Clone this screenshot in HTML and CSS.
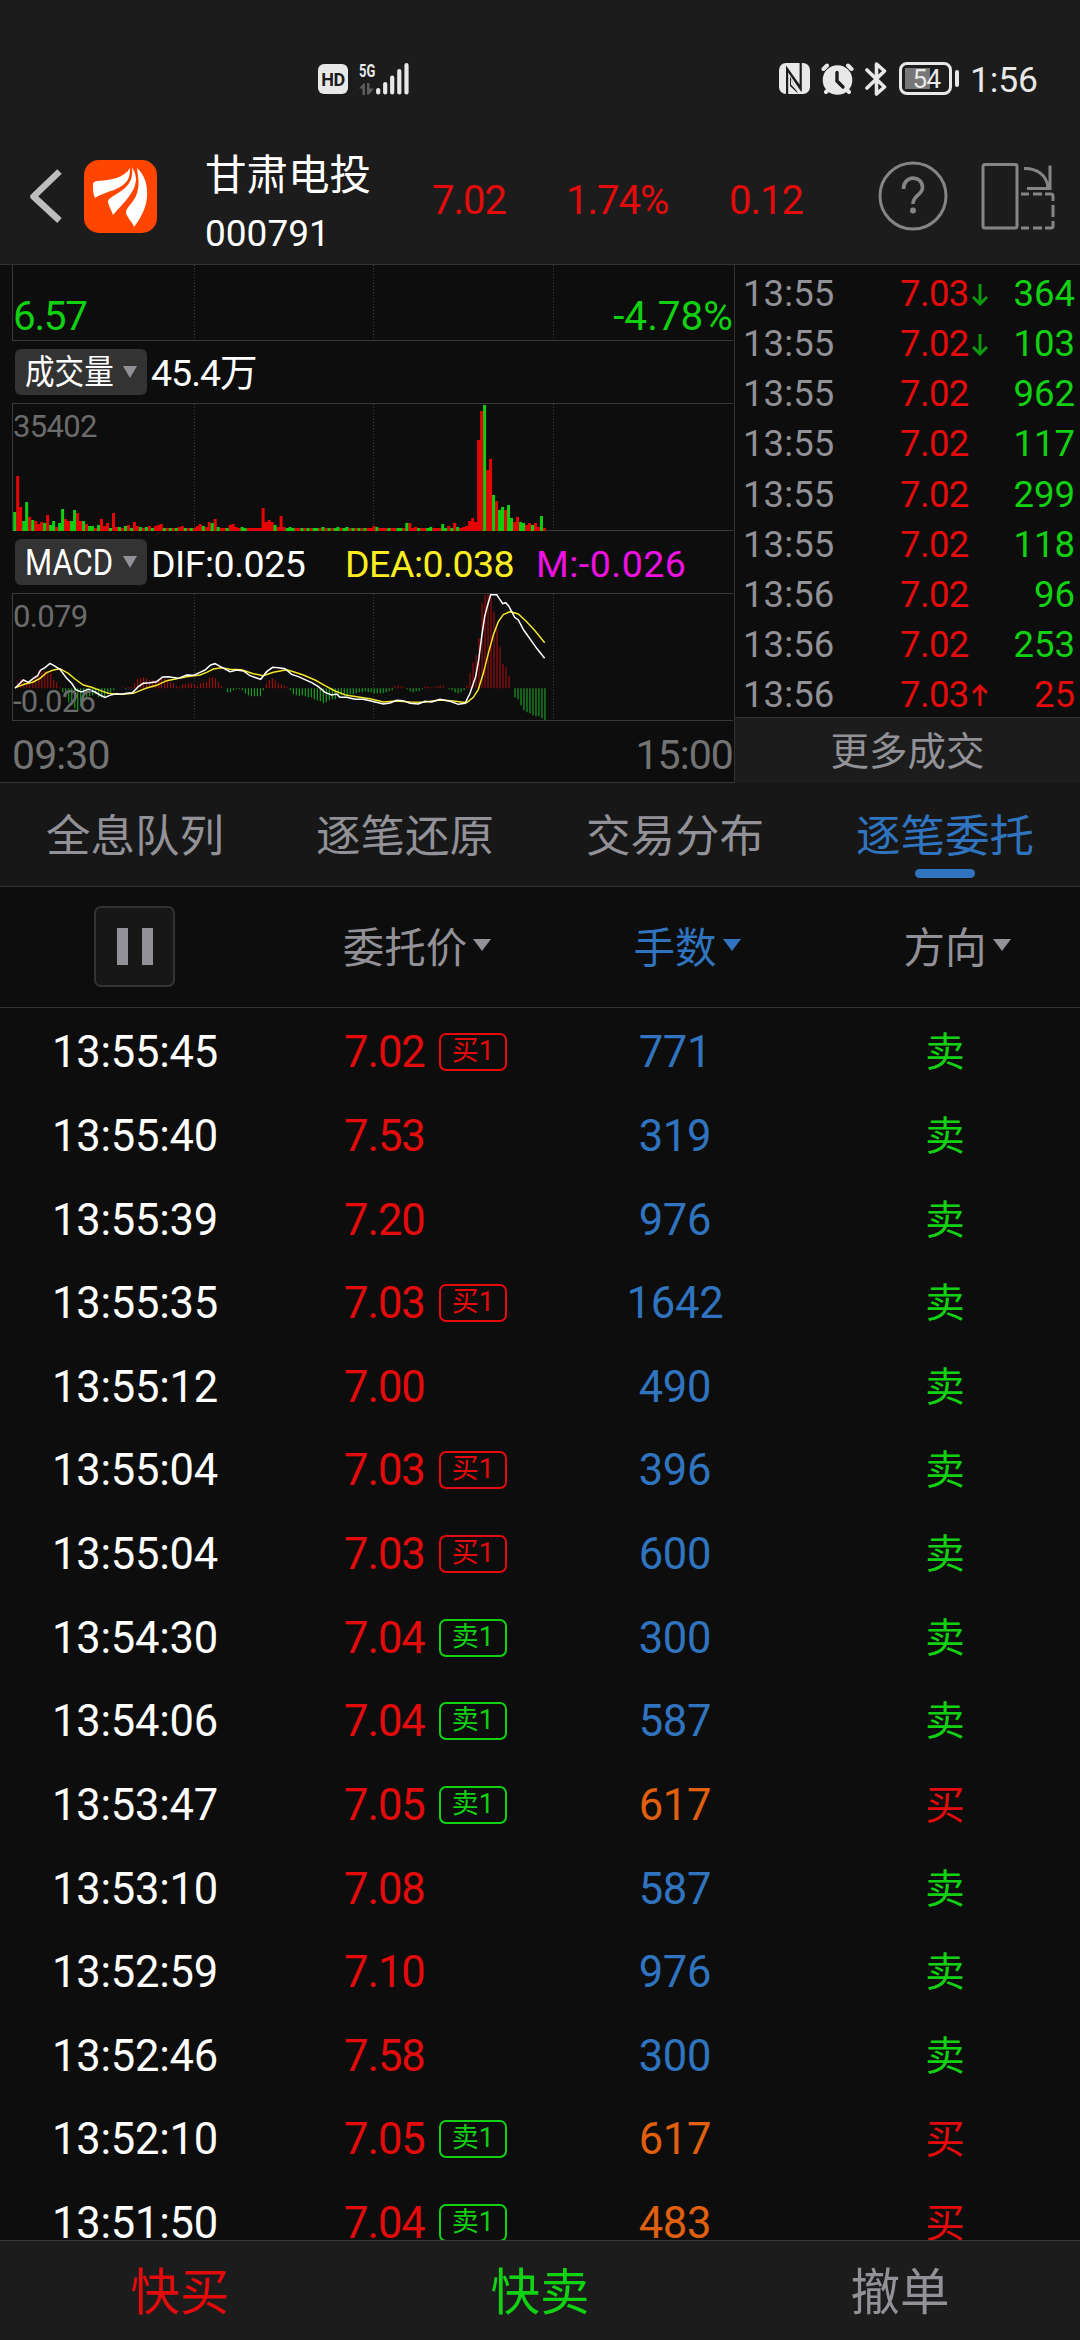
FILE: index.html
```html
<!DOCTYPE html>
<html lang="zh-CN">
<head>
<meta charset="utf-8">
<title>甘肃电投 000791</title>
<link rel="stylesheet" href="styles.css">
</head>
<body>
<div class="screen">
  <header class="header">
    <div class="status">
      <div class="status-left">
        <span class="hd">HD</span>
        <span class="net"><b class="net-type">5G</b>
          <svg class="net-arrows" width="15" height="12" viewBox="0 0 15 12"><path d="M0 5.500L4.500 .5H6V12H3.500V5.500ZM8 0h2.500v5.500H15L10 11.500H8Z" fill="#5c5c5c"/></svg>
        </span>
        <svg class="signal" width="33" height="33" viewBox="0 0 33 33" stroke="#e8e8e8" stroke-width="4.200" stroke-linecap="round"><path d="M2.200 28v2.500M9.200 22v8.500M16.200 15.500v15M23.300 9v21.500M30.500 3v27.500"/></svg>
      </div>
      <div class="status-right">
        <svg width="31" height="31" viewBox="0 0 31 31"><rect width="31" height="31" rx="7" fill="#e8e8e8"/><path d="M7 2.500V31H9.200V9.500L22 28.500h.8V0h-2.200V21.500ZM11 13.500V23L19 30.500Z" fill="#1c1c1c"/><path d="M12 16v5.500l6.500 7.200ZM11 3l8 13.500V8Z" fill="#e8e8e8"/></svg>
        <svg width="33" height="32" viewBox="0 0 33 32"><g stroke="#e8e8e8" stroke-width="4" stroke-linecap="round"><path d="M2.500 6L6 2.500M30.500 6L27 2.500M5 29l3-3M28 29l-3-3"/></g><circle cx="16.500" cy="17" r="14.800" fill="#e8e8e8"/><path d="M16 9.500V18l6 6" fill="none" stroke="#1c1c1c" stroke-width="3.400" stroke-linecap="round"/></svg>
        <svg width="22" height="34" viewBox="0 0 22 34" fill="none" stroke="#e8e8e8" stroke-width="3.600" stroke-linecap="round" stroke-linejoin="round"><path d="M2 8L19.500 25 11.500 32V2L19.500 9 2 26"/></svg>
        <div class="battery"><span class="battery-body"><span class="battery-num">54</span></span><span class="battery-nub"></span></div>
        <span class="clock">1:56</span>
      </div>
    </div>
    <div class="nav">
      <svg class="back" width="34" height="56" viewBox="0 0 34 56" fill="none" stroke="#bdbdbd" stroke-width="6.500" stroke-linejoin="round"><path d="M30.500 3.500L4.500 28.500 30.500 52.500"/></svg>
      <svg width="73" height="73" viewBox="0 0 73 73"><rect width="73" height="73" rx="15" fill="#ff4500"/><g fill="#fff"><path d="M9 25C9 22 11 21 14 21 27 20 40 18 46 8 46 18 44 22 36 27 27 32 18 33 11 38 9 34 9 30 9 25Z"/><path d="M48 7C50 11 52 14 52 20 51 33 40 42 29 55 27 49 24 45 24 41 25 38 28 37 31 35 41 29 50 23 48 7Z"/><path d="M53 8C60 14 64 24 63 37 62 49 56 59 50 67 48 61 42 57 42 52 43 46 50 43 53 33 56 23 54 17 53 8Z"/></g></svg>
      <div class="stock"><div class="stock-name">甘肃电投</div><div class="stock-code">000791</div></div>
      <span class="quote">7.02</span><span class="quote">1.74%</span><span class="quote">0.12</span>
      <svg width="70" height="70" viewBox="0 0 70 70" fill="none" stroke="#858585" stroke-width="3"><circle cx="35" cy="35" r="33"/><path d="M25.500 28C25.500 13.500 44.500 14 44.500 26.500 44.500 34 35 34 35 43" stroke-width="3.600"/><circle cx="35" cy="49.500" r="3" fill="#858585" stroke="none"/></svg>
      <svg width="74" height="68" viewBox="0 0 74 68" fill="none" stroke="#858585" stroke-width="3"><rect x="2" y="2.500" width="34" height="63.500" rx="2"/><path d="M43 6.500C54 6 66 12 67 26M69 3.500V26M46 26.500H70.500"/><path d="M40 32h8M52 32h9M64 32h6q2 0 2 2v5M72 43v12M72 59v5q0 2-2 2h-6M61 66h-9M48 66h-8"/></svg>
    </div>
  </header>

  <section class="market">
    <div class="charts">
      <div class="plot plot-price"><span class="low">6.57</span><span class="low low-pct">-4.78%</span></div>
      <div class="indicator">
        <span class="chip"><span class="chip-label">成交量</span><i class="tri chip-tri"></i></span>
        <span class="ind-value volume">45.4万</span>
      </div>
      <div class="plot plot-tall">
        <svg class="plot-svg" id="volume" width="720" height="127" viewBox="0 0 720 127"></svg>
        <span class="scale">35402</span>
      </div>
      <div class="indicator">
        <span class="chip"><span class="chip-label chip-latin">MACD</span><i class="tri chip-tri"></i></span>
        <span class="ind-value dif">DIF:0.025</span><span class="ind-value dea">DEA:0.038</span><span class="ind-value macd">M:-0.026</span>
      </div>
      <div class="plot plot-tall plot-macd">
        <svg class="plot-svg" id="macd" width="720" height="126" viewBox="39 192 2160 378">
          <g id="macd-bars"></g>
          <polyline fill="none" stroke="#f2e628" stroke-width="4.500" points="45,473 75,462 100,456 120,445 140,428 160,420 180,416 205,430 225,447 250,465 275,472 300,481 325,490 350,493 375,492 400,490 420,482 440,474 470,466 500,452 530,446 560,440 600,435 620,427 640,417 665,413 690,418 725,419 760,431 790,437 820,427 860,419 885,427 910,435 945,450 975,467 1005,483 1040,496 1070,500 1110,506 1150,516 1190,513 1230,516 1270,517 1320,510 1360,513 1400,518 1420,502 1435,478 1450,430 1465,370 1480,315 1495,275 1510,254 1530,245 1555,252 1580,275 1605,302 1634,338"/>
          <polyline fill="none" stroke="#fff" stroke-width="4.500" points="45,475 60,460 70,450 85,457 100,445 112,438 122,420 135,413 150,400 162,407 180,418 200,445 215,460 228,480 245,486 265,478 285,486 300,495 315,502 335,494 350,491 365,493 380,490 397,488 415,470 430,460 450,458 470,455 488,441 505,440 535,445 560,435 580,436 600,427 615,420 632,405 645,401 660,409 675,417 690,425 710,420 730,423 750,437 768,443 782,448 800,425 818,412 835,413 855,416 875,433 895,440 915,449 935,458 955,470 975,487 995,495 1010,492 1020,502 1040,502 1065,508 1090,508 1110,512 1150,522 1170,519 1190,511 1210,512 1230,520 1255,522 1275,514 1295,516 1320,508 1350,514 1375,523 1395,520 1410,490 1427,440 1436,390 1445,320 1454,260 1463,225 1472,194 1490,194 1508,221 1517,218 1526,228 1544,262 1555,270 1571,300 1589,325 1610,355 1634,385"/>
        </svg>
        <span class="scale">0.079</span><span class="scale">-0.026</span>
      </div>
      <div class="axis"><span>09:30</span><span>15:00</span></div>
    </div>
    <div class="ticks">
      <div class="tick-list">
        <div class="tick"><span>13:55</span><b>7.03</b><svg class="arrow down" viewBox="0 0 16 23"><path d="M8 1v20M1 14l7 7 7-7"/></svg><em>364</em></div>
        <div class="tick"><span>13:55</span><b>7.02</b><svg class="arrow down" viewBox="0 0 16 23"><path d="M8 1v20M1 14l7 7 7-7"/></svg><em>103</em></div>
        <div class="tick"><span>13:55</span><b>7.02</b><i></i><em>962</em></div>
        <div class="tick"><span>13:55</span><b>7.02</b><i></i><em>117</em></div>
        <div class="tick"><span>13:55</span><b>7.02</b><i></i><em>299</em></div>
        <div class="tick"><span>13:55</span><b>7.02</b><i></i><em>118</em></div>
        <div class="tick"><span>13:56</span><b>7.02</b><i></i><em>96</em></div>
        <div class="tick"><span>13:56</span><b>7.02</b><i></i><em>253</em></div>
        <div class="tick"><span>13:56</span><b>7.03</b><svg class="arrow up" viewBox="0 0 16 23"><path d="M8 22V2M1 9l7-7 7 7"/></svg><em class="red">25</em></div>
      </div>
      <div class="more">更多成交</div>
    </div>
  </section>

  <nav class="tabs">
    <span>全息队列</span><span>逐笔还原</span><span>交易分布</span><span class="active">逐笔委托</span>
  </nav>

  <div class="thead">
    <div><span class="pause"><i></i><i></i></span></div>
    <div><span class="sort">委托价<i class="tri"></i></span></div>
    <div><span class="sort blue">手数<i class="tri"></i></span></div>
    <div><span class="sort">方向<i class="tri"></i></span></div>
  </div>

  <main class="orders">
    <div class="order"><span>13:55:45</span><span class="price">7.02<i class="tag red">买1</i></span><span class="blue">771</span><span class="green">卖</span></div>
    <div class="order"><span>13:55:40</span><span class="price">7.53</span><span class="blue">319</span><span class="green">卖</span></div>
    <div class="order"><span>13:55:39</span><span class="price">7.20</span><span class="blue">976</span><span class="green">卖</span></div>
    <div class="order"><span>13:55:35</span><span class="price">7.03<i class="tag red">买1</i></span><span class="blue">1642</span><span class="green">卖</span></div>
    <div class="order"><span>13:55:12</span><span class="price">7.00</span><span class="blue">490</span><span class="green">卖</span></div>
    <div class="order"><span>13:55:04</span><span class="price">7.03<i class="tag red">买1</i></span><span class="blue">396</span><span class="green">卖</span></div>
    <div class="order"><span>13:55:04</span><span class="price">7.03<i class="tag red">买1</i></span><span class="blue">600</span><span class="green">卖</span></div>
    <div class="order"><span>13:54:30</span><span class="price">7.04<i class="tag green">卖1</i></span><span class="blue">300</span><span class="green">卖</span></div>
    <div class="order"><span>13:54:06</span><span class="price">7.04<i class="tag green">卖1</i></span><span class="blue">587</span><span class="green">卖</span></div>
    <div class="order"><span>13:53:47</span><span class="price">7.05<i class="tag green">卖1</i></span><span class="orange">617</span><span class="red">买</span></div>
    <div class="order"><span>13:53:10</span><span class="price">7.08</span><span class="blue">587</span><span class="green">卖</span></div>
    <div class="order"><span>13:52:59</span><span class="price">7.10</span><span class="blue">976</span><span class="green">卖</span></div>
    <div class="order"><span>13:52:46</span><span class="price">7.58</span><span class="blue">300</span><span class="green">卖</span></div>
    <div class="order"><span>13:52:10</span><span class="price">7.05<i class="tag green">卖1</i></span><span class="orange">617</span><span class="red">买</span></div>
    <div class="order"><span>13:51:50</span><span class="price">7.04<i class="tag green">卖1</i></span><span class="orange">483</span><span class="red">买</span></div>
  </main>

  <footer class="actions"><span class="red">快买</span><span class="green">快卖</span><span class="cancel">撤单</span></footer>
</div>
<script src="charts.js"></script>
</body>
</html>
```
FILE: charts.js
```js
// Minute volumes: positive closes up (red), negative closes down (green).
const volumes = [
  -19, 55, 24, -10, -29, 14, -11, 10, 7, 9, -8, 16, -6, -10, 4, -8, -22, 12, 10, -10,
  -21, 18, 10, -10, 7, -5, -5, 3, -6, 12, 5, 8, -3, 18, 4, -4, 3, -5, 6, -3,
  9, 5, -4, 3, -4, 5, -3, 5, 6, 7, -3, 3, -3, 3, -3, 4, 5, -3, 3, -3,
  3, 5, 7, -5, 4, 9, -8, 12, -4, 3, 3, -3, 6, 7, 4, 3, -4, -3, 3, 3,
  3, 3, 3, 23, 9, 11, 9, -6, 4, 15, 4, -3, -4, -3, 3, 3, -3, 3, -3, 3,
  -3, -3, 3, -4, 3, -3, 3, -3, -4, 3, -3, -4, 3, -3, 3, -3, 3, -3, 3, 3,
  5, -4, 3, 3, 3, -3, 3, 3, -3, -3, 3, -8, 8, 3, 4, -3, 3, 3, -3, -4,
  3, 3, 3, -7, -3, 5, -3, 8, -4, 3, 4, 5, 10, 13, 9, 91, 120, -126, 61, 72,
  -36, 30, -21, -24, 21, -26, -13, 9, 14, -9, -8, 6, 8, -6, 8, 4, -15, 3
];
// MACD histogram, one value per minute.
const histogram = [
  0, 6, 9, 9, 7, 7, 10, 13, 18, 17, 17, 17, 15, 8, 6, 1, -4, -9, -14, -17,
  -20, -22, -18, -14, -10, -8, -7, -6, -9, -9, -8, -6, -4, -2, 0, 0, 1, -1, 1, 1,
  5, 9, 10, 11, 10, 8, 8, 8, 9, 10, 10, 8, 6, 5, 2, 1, 4, 4, 5, 5,
  4, 2, 5, 6, 6, 11, 11, 10, 6, 2, 0, -4, -4, -2, -1, -1, -2, -5, -7, -8,
  -8, -8, -8, -2, 4, 8, 10, 8, 5, 4, 3, 1, -2, -6, -7, -8, -7, -8, -9, -9,
  -11, -12, -13, -15, -14, -12, -11, -11, -9, -7, -8, -7, -6, -6, -5, -4, -4, -3, -4, -4,
  -5, -5, -5, -5, -4, -3, -2, 2, 3, 2, 1, -1, -3, -4, -3, -3, -1, 2, 2, 1,
  1, 2, 3, 2, 0, -1, -2, -4, -5, -4, -2, 3, 15, 26, 33, 50, 85, 93, 94, 91,
  76, 59, 41, 24, 21, 12, 0, -9, -11, -17, -22, -24, -25, -27, -28, -28, -30, -32
];
const draw = (host, values, command, up, down, width) => {
  for (const [sign, color] of [[1, up], [-1, down]]) {
    const path = document.createElementNS('http://www.w3.org/2000/svg', 'path');
    path.setAttribute('d', values.map((v, i) => v * sign > 0 ? command(v, i) : '').join(''));
    path.setAttribute('stroke', color);
    path.setAttribute('stroke-width', width);
    host.appendChild(path);
  }
};
draw(document.getElementById('volume'), volumes,
  (v, i) => `M${(1.7 + 2.993 * i).toFixed(2)} 127v${-Math.abs(v)}`, '#e60505', '#12cc12', 3);
draw(document.getElementById('macd-bars'), histogram,
  (v, i) => `M${(44.5 + 8.985 * i).toFixed(1)} 475v${-v * 3}`, '#990d0d', '#1c9a24', 3.6);
```
FILE: styles.css
```css
* { box-sizing: border-box; }
body {
  margin: 0;
  background: #0d0d0d;
  color: #fff;
  font-family: Roboto, "Noto Sans CJK SC", sans-serif;
}
i, em { font-style: normal; }
b { font-weight: 400; }
svg { display: block; flex: none; }
.screen { width: 1080px; height: 2340px; overflow: hidden; display: flex; flex-direction: column; }
.red { color: #e30b0b; }
.green { color: #12d012; }
.blue { color: #3074c0; }
.orange { color: #e0600f; }

/* header */
.header { height: 265px; background: #1c1c1c; border-bottom: 1px solid #333; flex: none; }
.status { height: 128px; padding: 29px 44px 0 318px; display: flex; justify-content: space-between; align-items: center; color: #e8e8e8; }
.status-left { display: flex; align-items: center; }
.hd { width: 30px; height: 30px; border-radius: 6px; background: #e8e8e8; color: #1c1c1c; font: 700 18px/31px Roboto, sans-serif; text-align: center; letter-spacing: -.5px; }
.net { width: 16px; margin-left: 11px; height: 32px; }
.net-type { display: block; font: 700 18px/16px Roboto, sans-serif; width: 16px; transform: scaleX(.72); transform-origin: left; }
.net-arrows { margin-top: 4px; }
.signal { margin-left: 1px; }
.status-right { display: flex; align-items: center; }
.status-right > svg + svg { margin-left: 11px; }
.battery { display: flex; align-items: center; margin-left: 12px; gap: 3px; }
.battery-body { width: 53px; height: 33px; border: 3px solid #e8e8e8; border-radius: 8px; padding-left: 2px; background: linear-gradient(#777, #777) 3px 3px / 25px 21px no-repeat; text-align: center; }
.battery-num { display: block; font-size: 26px; line-height: 28px; letter-spacing: -.5px; }
.battery-nub { width: 4px; height: 17px; border-radius: 2px; background: #e8e8e8; }
.clock { font-size: 35.500px; line-height: 40px; margin-left: 11px; width: 66px; letter-spacing: -.2px; padding-top: 2px; }
.nav { height: 136px; display: grid; grid-template-columns: 84px 121px 227px 134px 163px 149px 103px 1fr; align-items: center; }
.back { margin-left: 29px; }
.stock { padding-top: 16px; }
.stock-name { font-size: 41.500px; line-height: 60px; }
.stock-code { font-size: 37px; line-height: 56px; }
.quote { color: #e30b0b; font-size: 40px; line-height: 48px; padding-top: 9px; letter-spacing: -1px; }

/* charts and ticks */
.market { height: 518px; display: grid; grid-template-columns: 734px 1fr; border-bottom: 1px solid #333; flex: none; }
.charts { padding-left: 12px; }
.plot {
  position: relative;
  width: 721px;
  border: solid #3a3a3a;
  border-width: 0 0 1px 1px;
  display: flex;
  justify-content: space-between;
  background:
    repeating-linear-gradient(#3d3d3d 0 1px, transparent 1px 3px) 181px 0 / 1px 100% no-repeat,
    repeating-linear-gradient(#3d3d3d 0 1px, transparent 1px 3px) 360px 0 / 1px 100% no-repeat,
    repeating-linear-gradient(#3d3d3d 0 1px, transparent 1px 3px) 540px 0 / 1px 100% no-repeat;
}
.plot-price { height: 76px; align-items: flex-end; }
.plot-tall { height: 128px; border-top-width: 1px; flex-direction: column; }
.plot-svg { position: absolute; left: 0; top: 0; }
.low { color: #12d012; font-size: 40.500px; line-height: 47px; letter-spacing: -1.300px; }
.low-pct { letter-spacing: 0; }
.scale { position: relative; color: #6b6b6b; font-size: 31px; line-height: 36px; padding-top: 5px; letter-spacing: -.7px; }
.indicator { height: 62px; display: flex; align-items: center; padding-left: 3px; }
.chip { width: 132px; height: 46px; border-radius: 6px; background: #333; display: flex; align-items: center; padding-left: 10px; flex: none; }
.chip-label { width: 88px; font-size: 34px; line-height: 46px; white-space: nowrap; transform: scaleX(.87); transform-origin: left; }
.chip-latin { font-size: 37px; padding-top: 1px; transform: scaleX(.84); }
.tri { display: block; border: solid transparent; border-width: 12px 9px 0; border-top-color: currentColor; }
.chip-tri { color: #919197; border-width: 12px 7.500px 0; margin-left: 10px; }
.ind-value { font-size: 37.500px; line-height: 48px; white-space: nowrap; letter-spacing: -.5px; margin-left: 4px; padding-top: 3px; }
.volume { letter-spacing: -1px; padding-top: 1px; }
.dif { width: 194px; }
.dea { width: 191px; margin-left: 0; color: #fcee21; }
.macd { margin-left: 0; color: #ee12e2; letter-spacing: .5px; }
.axis { display: flex; justify-content: space-between; width: 721px; color: #737373; font-size: 41px; line-height: 48px; padding-top: 10px; letter-spacing: -.9px; }
.ticks { border-left: 1px solid #333; display: flex; flex-direction: column; }
.tick-list { height: 452px; padding: 4px 5px 0 8px; }
.tick { height: 50.130px; display: grid; grid-template-columns: 157px 72px 18px 1fr; align-items: center; font-size: 36.500px; line-height: 50px; }
.tick span { color: #919197; letter-spacing: .1px; }
.tick b { color: #e30b0b; letter-spacing: -.6px; }
.tick em { color: #12d012; text-align: right; }
.tick em.red { color: #e30b0b; }
.arrow { width: 16px; height: 23px; fill: none; stroke-width: 3; }
.down { stroke: #0d980d; }
.up { stroke: #e30b0b; }
.more { flex: 1; border-top: 1px solid #333; background: #1c1c1c; color: #919197; font-size: 38.500px; line-height: 67px; text-align: center; }

/* tabs */
.tabs { height: 104px; display: grid; grid-template-columns: repeat(4, 1fr); background: #171717; border-bottom: 1px solid #333; color: #919197; font-size: 44.500px; line-height: 108px; text-align: center; flex: none; }
.tabs .active { color: #3074c0; position: relative; height: 103px; }
.active::after { content: ""; position: absolute; left: 50%; bottom: 8px; width: 60px; height: 9px; margin-left: -30px; border-radius: 5px; background: #3074c0; }

/* order table */
.thead { height: 121px; display: grid; grid-template-columns: repeat(4, 1fr); border-bottom: 1px solid #333; align-items: center; justify-items: center; color: #919197; font-size: 41.500px; flex: none; }
.sort { position: relative; display: block; line-height: 60px; padding-top: 4px; }
.sort .tri { position: absolute; left: 100%; top: 24px; margin-left: 6px; }
.pause { width: 81px; height: 81px; border: 2px solid #333; border-radius: 7px; background: #171717; display: flex; align-items: center; justify-content: center; gap: 14px; margin: 0 1px 1px 0; }
.pause i { width: 11px; height: 37px; background: #919197; }
.orders { height: 1232px; overflow: hidden; padding-top: 3px; flex: none; }
.order { height: 83.640px; display: grid; grid-template-columns: repeat(4, 1fr); align-items: center; text-align: center; font-size: 43.500px; letter-spacing: -.2px; line-height: 60px; }
.order > span { padding-top: 1px; }
.order .price { color: #e30b0b; display: flex; align-items: center; padding-left: 74px; letter-spacing: -1px; }
.order > :last-child { font-size: 39.500px; }
.tag { margin: -2px 0 0 14px; width: 68px; height: 38px; border: 2px solid; border-radius: 7px; font-size: 27px; line-height: 33px; letter-spacing: 0; text-align: center; }

/* bottom actions */
.actions { flex: 1; display: grid; grid-template-columns: repeat(3, 1fr); border-top: 1px solid #383838; background: #1c1c1c; font-size: 49.500px; line-height: 104px; text-align: center; }
.cancel { color: #919197; }
```
